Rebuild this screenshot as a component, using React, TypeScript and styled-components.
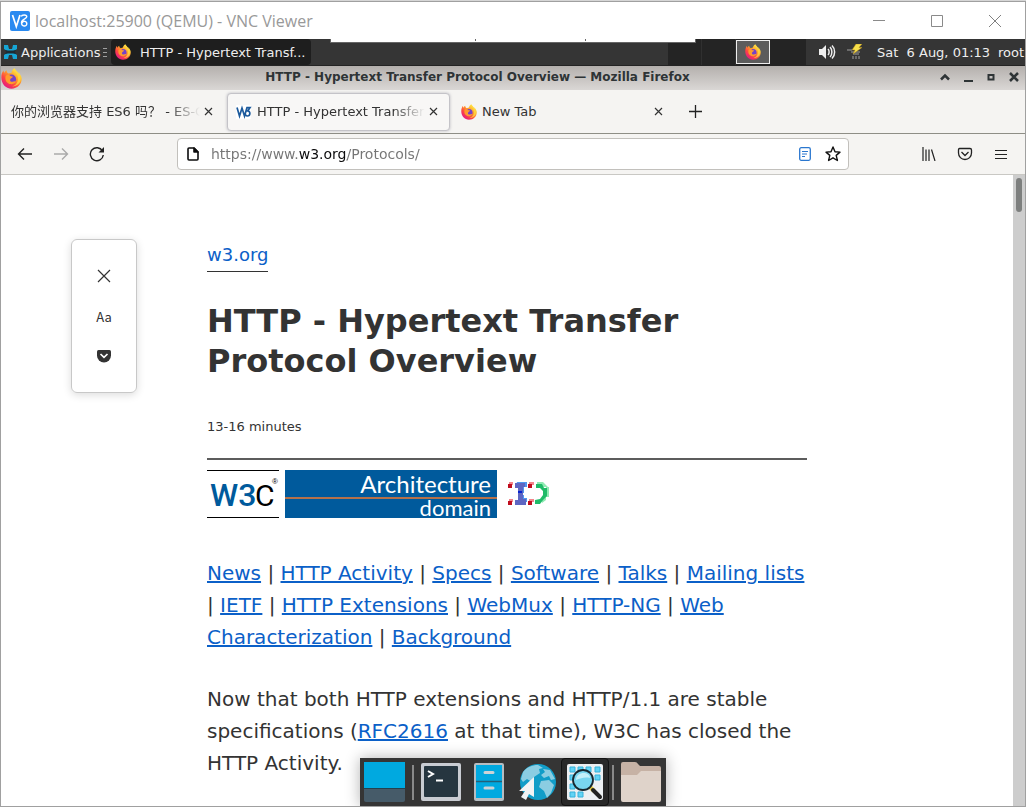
import React from "react";
import styled, { createGlobalStyle } from "styled-components";

const GlobalStyle = createGlobalStyle`
  * { box-sizing: border-box; }
  body {
    margin: 0;
    background: #d6d6d6;
    color: #333333;
    font-family: "DejaVu Sans", "Noto Sans CJK SC", sans-serif;
    font-size: 13px;
  }
  button {
    border: 0;
    padding: 0;
    margin: 0;
    background: transparent;
    color: inherit;
    font: inherit;
  }
  svg { display: block; flex: none; }
`;

const Screen = styled.div`
  height: 100vh;
  padding-top: 1px;
`;

const ViewerWindow = styled.div`
  position: relative;
  display: flex;
  flex-direction: column;
  height: 100%;
  overflow: hidden;
  border: 1px solid #a0a0a0;
  background: #ffffff;
`;

const ViewerBar = styled.header`
  display: flex;
  flex: none;
  align-items: center;
  height: 37px;
  padding: 0 1px 0 9px;
`;

const ViewerTitle = styled.div`
  flex: 1;
  padding-left: 5px;
  color: #999999;
  font-family: "Open Sans", "Noto Sans", sans-serif;
  font-size: 16px;
  white-space: nowrap;
`;

const ViewerButton = styled.button`
  display: flex;
  align-items: center;
  justify-content: center;
  width: 58px;
  height: 37px;
`;

const Panel = styled.nav`
  position: relative;
  display: flex;
  flex: none;
  align-items: stretch;
  height: 27px;
  border-bottom: 1px solid #242424;
  background: #353535;
  color: #eeeeee;
  white-space: nowrap;
`;

const ConnectionTab = styled.div`
  position: absolute;
  top: 0;
  left: 50%;
  width: 366px;
  height: 4px;
  margin-left: -183px;
  display: flex;
  justify-content: space-between;
  padding: 0 109px 0 144px;
  border: 1px solid #666666;
  border-top: 0;
  background: #ffffff;
`;

const Tick = styled.span`
  width: 1px;
  height: 2px;
  background: #666666;
`;

const AppMenu = styled.button`
  display: flex;
  align-items: center;
  width: 110px;
  padding-left: 2px;
  gap: 3px;
`;

const TaskButton = styled.button`
  display: flex;
  align-items: center;
  width: 200px;
  padding: 0 4px;
  gap: 9px;
  border-radius: 4px;
  background: #1e1e1e;
  text-align: left;
`;

const Spacer = styled.div`
  flex: 1;
`;

const Pager = styled.div`
  display: flex;
  width: 138px;
  background: #242424;
`;

const Workspace = styled.button<{ $active?: boolean }>`
  display: flex;
  flex: none;
  align-items: center;
  justify-content: center;
  width: 34px;
  margin: ${(p) => (p.$active ? "1px 0" : "0")};
  border: ${(p) => (p.$active ? "1px solid #eeeeee" : "0")};
  border-right: ${(p) => (p.$active ? "1px solid #eeeeee" : "1px solid #303030")};
  background: ${(p) => (p.$active ? "#5c5c5c" : "transparent")};
`;

const Tray = styled.div`
  display: flex;
  align-items: center;
  padding-left: 13px;
  width: 219px;
`;

const TrayItem = styled.div<{ $width: number }>`
  width: ${(p) => p.$width}px;
  flex: none;
`;

const BrowserTitle = styled.div`
  display: flex;
  flex: none;
  align-items: center;
  height: 24px;
  background: linear-gradient(#b4b0ad, #dad7d5);
  color: #2e3436;
`;

const BrowserTitleText = styled.div`
  flex: 1;
  font-size: 12px;
  font-weight: bold;
  line-height: 20px;
  padding-bottom: 2px;
  text-align: center;
  white-space: nowrap;
`;

const TitleButton = styled.button`
  display: flex;
  align-items: center;
  justify-content: center;
  width: 23px;
  height: 24px;
  padding-bottom: 2px;
`;

const TabStrip = styled.div`
  display: flex;
  flex: none;
  align-items: center;
  height: 44px;
  padding: 0 1px;
  gap: 2px;
  border-bottom: 1px solid #8e8e86;
  background: #f5f4f2;
`;

const Tab = styled.div<{ $active?: boolean }>`
  display: flex;
  flex: 0 1 223px;
  align-items: center;
  min-width: 0;
  height: 38px;
  padding: 0 8px;
  border: 1px solid ${(p) => (p.$active ? "#c4c3c8" : "transparent")};
  border-radius: 4px;
  background: ${(p) => (p.$active ? "#f8f7f6" : "transparent")};
  box-shadow: ${(p) => (p.$active ? "0 0 3px rgba(100, 100, 120, 0.4)" : "none")};
`;

const TabIcon = styled.span`
  width: 16px;
  margin-right: 5px;
  flex: none;
`;

const TabLabel = styled.span<{ $fade?: boolean }>`
  flex: 1;
  min-width: 0;
  overflow: hidden;
  color: #333333;
  font-size: 13px;
  line-height: 20px;
  white-space: pre;
  mask-image: ${(p) => (p.$fade ? "linear-gradient(to left, transparent, #000000 32px)" : "none")};
`;

const IconButton = styled.button<{ $w: number }>`
  display: flex;
  flex: none;
  align-items: center;
  justify-content: center;
  width: ${(p) => p.$w}px;
  height: 32px;
`;

const NavBar = styled.div`
  display: flex;
  flex: none;
  align-items: center;
  height: 41px;
  padding: 0 6px;
  border-bottom: 1px solid #c9c8c4;
  background: #f5f4f2;
`;

const AddressBox = styled.form`
  display: flex;
  flex: 1;
  align-items: center;
  height: 32px;
  margin: 0 62px;
  padding: 0 1px;
  border: 1px solid #c2c0bc;
  border-radius: 4px;
  background: #ffffff;
`;

const AddressInput = styled.input`
  flex: 1;
  min-width: 0;
  height: 28px;
  padding: 0;
  margin-left: 4px;
  border: 0;
  outline: 0;
  background: linear-gradient(90deg, #757575 88px, #0c0c0d 88px, #0c0c0d 136px, #757575 136px);
  background-clip: text;
  color: transparent;
  font-family: "DejaVu Sans", sans-serif;
  font-size: 14px;
`;

const Viewport = styled.div`
  display: flex;
  flex: 1;
  min-height: 0;
`;

const Reader = styled.main`
  display: grid;
  flex: 1;
  grid-template-columns: minmax(80px, 1fr) minmax(0, 600px) minmax(0, 1fr);
  align-items: start;
  overflow: hidden;
  padding-top: 64px;
`;

const ScrollTrack = styled.div`
  width: 12px;
  padding: 3px;
  background: #cdcdcd;
`;

const ScrollThumb = styled.div`
  height: 34px;
  border-radius: 3px;
  background: #7d7f7e;
`;

const ReaderTools = styled.aside`
  justify-self: center;
  display: flex;
  flex-direction: column;
  width: 66px;
  padding: 16px 0;
  border: 1px solid #c8c8c8;
  border-radius: 6px;
  box-shadow: 0 2px 8px rgba(0, 0, 0, 0.14);
`;

const ToolButton = styled.button`
  display: flex;
  align-items: center;
  justify-content: center;
  height: 40px;
  font-family: "Noto Sans CJK SC", sans-serif;
  font-size: 13px;
`;

const Article = styled.article`
  font-size: 20px;
  line-height: 32px;
  a { color: #0b60c8; }
`;

const Domain = styled.a`
  display: block;
  width: fit-content;
  height: 33px;
  border-bottom: 1px solid #333333;
  font-size: 18px;
  text-decoration: none;
`;

const Heading = styled.h1`
  margin: 29px 0 30px;
  font-size: 32px;
  line-height: 40px;
`;

const ReadTime = styled.div`
  height: 49px;
  border-bottom: 2px solid #5c5c5c;
  font-size: 13px;
`;

const Logos = styled.div`
  display: flex;
  align-items: center;
  gap: 6px;
  margin: 10px 0 39px;
`;

const Paragraph = styled.p`
  margin: 0 0 30px;
`;

const Dock = styled.div`
  position: absolute;
  bottom: 0;
  left: 50%;
  display: flex;
  align-items: center;
  width: 306px;
  height: 48px;
  margin-left: -153px;
  padding-left: 1px;
  background: #353535;
  box-shadow: 0 0 14px rgba(0, 0, 0, 0.3);
`;

const DockButton = styled.button<{ $active?: boolean }>`
  display: flex;
  flex: none;
  align-items: center;
  justify-content: center;
  width: 48px;
  height: 48px;
  border: ${(p) => (p.$active ? "1px solid #111111" : "0")};
  border-radius: 4px;
  background: ${(p) => (p.$active ? "#282828" : "transparent")};
`;

const DockLine = styled.span`
  width: 2px;
  height: 35px;
  margin: 0 3px;
  background: #8a8a8a;
`;

const FirefoxIcon = ({ size, id }: { size: number; id: string }) => (
  <svg width={size} height={size} viewBox="0 0 32 32" aria-hidden="true">
    <defs>
      <linearGradient id={id} x1="0.85" y1="0.1" x2="0.2" y2="0.95">
        <stop offset="0" stopColor="#fff44f" />
        <stop offset="0.35" stopColor="#ffa32b" />
        <stop offset="0.65" stopColor="#ff4a3e" />
        <stop offset="1" stopColor="#e31587" />
      </linearGradient>
    </defs>
    <path fill={`url(#${id})`} d="M29.5 10.5c-.7-1.700-2.100-3.500-3.200-4.100.9 1.700 1.300 3.200 1.500 4.300C26 6.300 23 4.400 20.500.4c-2.700 1.500-4.200 4-4.500 6.700-1.500.1-3 .6-4.200 1.400C9.500 7.800 8.400 5.500 8.500 3.500 6.800 4.300 5.600 6 5 7.500c-.9-1-1-3-.9-4C1.700 6 .5 10 .5 14.500.5 24 7 31.500 16 31.500S31.500 25 31.500 16.500c0-2-.8-4.500-2-6z" />
    <circle cx="16" cy="17" r="7" fill="#7542c9" />
    <path fill="#ff9a2c" d="M7 12c3-3 6-2 8 .4 1 .3 3 .2 3.300.5-.2 1.800-3.300 2.300-4.300 4.500-.6 2 1 4 3.500 3.600 2-.4 3.400-1.500 5-.5-1.500 3-4.500 4.500-8 4-5-.7-9-5.500-7.500-12.500z" />
    <path fill="#ffd83d" d="M20 1c0 5 6 7.500 6.500 14 0-2-.5-3.500-1.500-4.500C28 19 24 26 17 28c8 0 13-5 13-11.500C30 9 23 6 20 1z" opacity=".8" />
  </svg>
);

const Cross = ({ size, w = 1.2, color = "#333333" }: { size: number; w?: number; color?: string }) => (
  <svg width={size} height={size} viewBox={`0 0 ${size} ${size}`} stroke={color} strokeWidth={w} fill="none" aria-hidden="true">
    <path d={`M1 1L${size - 1} ${size - 1}M${size - 1} 1L1 ${size - 1}`} />
  </svg>
);

const VncLogo = () => (
  <svg width="20" height="20" viewBox="0 0 20 20" fill="none" stroke="#ffffff" strokeWidth="1.700" aria-hidden="true">
    <rect width="20" height="20" rx="2" fill="#2a8af0" stroke="none" />
    <path d="M2.500 4L6.300 15.500L10 4" />
    <path strokeWidth="1.400" d="M11.300 5.500c.5-2 5.500-2.200 5.500.3 0 2.200-5.300 2-5.300 5.700 0 4.500 5.300 4.500 5.300 1.200 0-3-4-3-4.600-1" />
  </svg>
);

const MenuLogo = () => (
  <svg width="15" height="16" viewBox="0 0 15 16" aria-hidden="true">
    <path fill="#16a5d5" d="M1 1h4l1 4h3l1-4h4v4l-3 2v2l3 2v4h-4l-1-4H6l-1 4H1v-4l3-2V7L1 5z" />
    <path fill="#1c2c34" d="M2 6l3 .5h5L13 6l-1 2 1 2-3-.5H5L2 10l1-2z" />
  </svg>
);

const W3Icon = () => (
  <svg width="16" height="16" viewBox="0 0 16 16" aria-hidden="true">
    <rect width="15" height="14" y="1" fill="#ffffff" />
    <path fill="none" stroke="#1c5a9c" strokeWidth="1.700" d="M1 3.500l2.500 8.500L6 4l2.500 8L11 3.700h3L11.700 7c3 .2 2.800 5-.2 5-1 0-1.500-.5-2-1.300" />
  </svg>
);

const W3CLogo = () => (
  <svg width="72" height="48" viewBox="0 0 72 48" role="img" aria-label="W3C">
    <rect width="72" height="48" fill="#ffffff" />
    <path d="M0 .5h72M0 47.500h72" stroke="#000000" />
    <text x="3" y="36" fontFamily="Roboto, sans-serif" fontSize="32" fontWeight="500" fill="#005a9c">W3</text>
    <text x="48" y="36" fontFamily="Roboto, sans-serif" fontSize="30" fill="#000000">C</text>
    <text x="65" y="14" fontFamily="Liberation Sans" fontSize="8" fill="#000000">®</text>
  </svg>
);

const DomainBanner = () => (
  <svg width="212" height="48" viewBox="0 0 212 48" role="img" aria-label="Architecture domain">
    <rect width="212" height="48" fill="#005a9c" />
    <path d="M0 28h212" stroke="#b5714a" strokeWidth="2" />
    <g fill="#ffffff" fontFamily="Lato, sans-serif" textAnchor="end">
      <text x="206" y="23" fontSize="24">Architecture</text>
      <text x="206" y="46" fontSize="22">domain</text>
    </g>
  </svg>
);

const HttpNgMark = () => (
  <svg width="52" height="48" viewBox="0 0 52 48" aria-hidden="true">
    <path fill="#f2868c" d="M6 12h4v3H6zM26 12h5v3h-5zM6 29h4v3H6zM26 29h5v3h-5z" />
    <path fill="#c00d1e" d="M5 14h4v4H5zM25 14h4v4h-4zM5 31h4v4H5zM25 31h4v4h-4z" />
    <path fill="#4f97ef" d="M14 12h10v5h-3v6h-5v-5h-4zM17 25h4v3h3v4h-5z" />
    <path fill="#5e66c2" d="M12 13h10v4h-2v12h3v6H12v-5h3V18h-3z" />
    <path fill="#0622cf" d="M15 21h4v2h-4z" />
    <path fill="#8feab2" d="M34 12h6l5 5h-7l-4-1zM43 17h3v10h-3zM38 29l5-3v4l-4 3z" />
    <path fill="#1fbb68" d="M33 14h6l2 4h3v8l-4 4-3 4h-5v-4l5-1 3-4v-4l-3-3h-4z" />
  </svg>
);

const links = [
  "News", "HTTP Activity", "Specs", "Software", "Talks", "Mailing lists",
  "IETF", "HTTP Extensions", "WebMux", "HTTP-NG", "Web Characterization", "Background",
];

export default function App() {
  return (
    <Screen>
      <GlobalStyle />
      <ViewerWindow>
        <ViewerBar>
          <VncLogo />
          <ViewerTitle>localhost:25900 (QEMU) - VNC Viewer</ViewerTitle>
          <ViewerButton aria-label="Minimize viewer">
            <svg width="12" height="12" stroke="#8a8a8a"><path d="M0 5.500h12" /></svg>
          </ViewerButton>
          <ViewerButton aria-label="Maximize viewer">
            <svg width="12" height="12" stroke="#8a8a8a" fill="none"><path d="M.5.5h11v11H.5z" /></svg>
          </ViewerButton>
          <ViewerButton aria-label="Close viewer"><Cross size={14} w={1} color="#808080" /></ViewerButton>
        </ViewerBar>

        <Panel>
          <AppMenu>
            <MenuLogo />
            <span>Applications</span>
            <svg width="4" height="11" stroke="#a0a0a0"><path d="M0 1.500h4M0 5.500h4M0 9.500h4" /></svg>
          </AppMenu>
          <TaskButton>
            <FirefoxIcon size={16} id="ff-task" />
            <span>HTTP - Hypertext Transf...</span>
          </TaskButton>
          <Spacer />
          <Pager>
            <Workspace aria-label="Workspace 1" />
            <Workspace aria-label="Workspace 2" />
            <Workspace aria-label="Workspace 3" $active><FirefoxIcon size={16} id="ff-pager" /></Workspace>
          </Pager>
          <Tray>
            <TrayItem $width={28}>
              <svg width="17" height="16" viewBox="0 0 17 16" fill="none" stroke="#eeeeee" strokeWidth="1.500">
                <path fill="#eeeeee" stroke="none" d="M0 5h3l4-4v14l-4-4H0z" />
                <path d="M9 5c1.500 1.500 1.500 4.500 0 6M11 3c2.500 2.500 2.500 7.500 0 10M13 1.500c3.500 3.500 3.500 9.500 0 13" />
              </svg>
            </TrayItem>
            <TrayItem $width={30}>
              <svg width="16" height="16" viewBox="0 0 16 16">
                <path d="M0 6h5M4 8h9M6 10h6M6 12v3M9 12v3M12 12v3" fill="none" stroke="#a0a0a0" />
                <path fill="#f7e04b" stroke="#b48c1c" strokeWidth=".5" d="M9 0h6l-3 3.500h3L6 10l2-4H5z" />
              </svg>
            </TrayItem>
            <TrayItem $width={121}>Sat&nbsp; 6 Aug, 01:13</TrayItem>
            <span>root</span>
          </Tray>
          <ConnectionTab><Tick /><Tick /></ConnectionTab>
        </Panel>

        <BrowserTitle>
          <FirefoxIcon size={21} id="ff-title" />
          <BrowserTitleText>HTTP - Hypertext Transfer Protocol Overview — Mozilla Firefox</BrowserTitleText>
          <TitleButton aria-label="Roll up">
            <svg width="10" height="10" fill="none" stroke="#2e3436" strokeWidth="2.500"><path d="M1 7.500l4-4 4 4" /></svg>
          </TitleButton>
          <TitleButton aria-label="Minimize">
            <svg width="10" height="10" fill="#2e3436"><path d="M1 8h9v2H1z" /></svg>
          </TitleButton>
          <TitleButton aria-label="Maximize">
            <svg width="8" height="8" fill="none" stroke="#2e3436" strokeWidth="2"><path d="M1.500 2h5v4.500h-5z" /></svg>
          </TitleButton>
          <TitleButton aria-label="Close"><Cross size={10} w={2.5} color="#2e3436" /></TitleButton>
        </BrowserTitle>

        <TabStrip>
          <Tab>
            <TabLabel $fade>你的浏览器支持 ES6 吗？ - ES-CHECKER</TabLabel>
            <IconButton $w={16} aria-label="Close first tab"><Cross size={9} /></IconButton>
          </Tab>
          <Tab $active>
            <TabIcon><W3Icon /></TabIcon>
            <TabLabel $fade>HTTP - Hypertext Transfer Protocol</TabLabel>
            <IconButton $w={16} aria-label="Close second tab"><Cross size={9} /></IconButton>
          </Tab>
          <Tab>
            <TabIcon><FirefoxIcon size={16} id="ff-tab" /></TabIcon>
            <TabLabel>New Tab</TabLabel>
            <IconButton $w={16} aria-label="Close third tab"><Cross size={9} /></IconButton>
          </Tab>
          <IconButton $w={36} aria-label="Open a new tab">
            <svg width="13" height="13" stroke="#222222" strokeWidth="1.300"><path d="M0 6.500h13M6.500 0v13" /></svg>
          </IconButton>
        </TabStrip>

        <NavBar>
          <IconButton $w={36} aria-label="Back">
            <svg width="16" height="16" fill="none" stroke="#222222" strokeWidth="1.400"><path d="M15 8H1.500M7 2.500L1.500 8 7 13.500" /></svg>
          </IconButton>
          <IconButton $w={36} aria-label="Forward">
            <svg width="16" height="16" fill="none" stroke="#aaaaaa" strokeWidth="1.400"><path d="M1 8h13.500M9 2.500L14.500 8 9 13.500" /></svg>
          </IconButton>
          <IconButton $w={36} aria-label="Reload">
            <svg width="16" height="16" fill="none" stroke="#222222" strokeWidth="1.400">
              <path d="M13.500 5A6.500 6.500 0 1 0 14.300 9" />
              <path fill="#222222" stroke="none" d="M15 1v5.500H9.500z" />
            </svg>
          </IconButton>
          <AddressBox>
            <IconButton $w={28} type="button" aria-label="Page information">
              <svg width="12" height="14" fill="none" stroke="#0c0c0d" strokeWidth="1.600" strokeLinejoin="round">
                <path d="M1 2q0-1 1-1h5l4 4v7q0 1-1 1H2q-1 0-1-1z" /><path fill="#0c0c0d" d="M7 1v4h4z" />
              </svg>
            </IconButton>
            <AddressInput aria-label="Address" defaultValue="https://www.w3.org/Protocols/" />
            <IconButton $w={28} type="button" aria-label="Reader view">
              <svg width="12" height="14" fill="none" stroke="#2a77cf" strokeWidth="1.300">
                <rect x=".7" y=".7" width="10.600" height="12.600" rx="1.500" />
                <path strokeWidth="1" d="M3 4.500h6M3 7h5M3 9.500h3" />
              </svg>
            </IconButton>
            <IconButton $w={28} type="button" aria-label="Bookmark this page">
              <svg width="16" height="16" fill="none" stroke="#111111" strokeWidth="1.400" strokeLinejoin="round">
                <path d="M8 1l2 4.700 5 .4-3.800 3.300 1.200 5.100L8 11.800l-4.400 2.700 1.200-5.100L1 6.100l5-.4z" />
              </svg>
            </IconButton>
          </AddressBox>
          <IconButton $w={36} aria-label="Library">
            <svg width="14" height="14" stroke="#222222" strokeWidth="1.200"><path d="M1 0v14M4 2.500V14M7 2.500V14M9.500 2.500L13 14" /></svg>
          </IconButton>
          <IconButton $w={36} aria-label="Save to Pocket">
            <svg width="16" height="14" fill="none" stroke="#222222" strokeWidth="1.300">
              <path d="M2.500 1.500h10.500q1.500 0 1.500 1.500v3a6.500 6.500 0 0 1-13 0V3q0-1.500 1-1.500z" /><path d="M4.500 5L8 8.500 11.500 5" />
            </svg>
          </IconButton>
          <IconButton $w={36} aria-label="Menu">
            <svg width="12" height="11" stroke="#222222" strokeWidth="1"><path d="M0 1.500h12M0 5.500h12M0 9.500h12" /></svg>
          </IconButton>
        </NavBar>

        <Viewport>
          <Reader>
            <ReaderTools>
              <ToolButton aria-label="Close reader view"><Cross size={14} /></ToolButton>
              <ToolButton>Aa</ToolButton>
              <ToolButton aria-label="Save article">
                <svg width="14" height="13" fill="#333333"><path d="M1.500 0h11q1.500 0 1.500 1.500v4a7 7 0 0 1-14 0v-4Q0 0 1.500 0z" /><path d="M3.500 4L7 7.300 10.500 4" fill="none" stroke="#ffffff" strokeWidth="1.700" /></svg>
              </ToolButton>
            </ReaderTools>
            <Article>
              <Domain href="#w3">w3.org</Domain>
              <Heading>HTTP - Hypertext Transfer Protocol Overview</Heading>
              <ReadTime>13-16 minutes</ReadTime>
              <Logos><W3CLogo /><DomainBanner /><HttpNgMark /></Logos>
              <Paragraph>
                {links.map((label, i) => (
                  <React.Fragment key={label}>
                    {i > 0 && " | "}
                    <a href="#section">{label}</a>
                  </React.Fragment>
                ))}
              </Paragraph>
              <Paragraph>
                Now that both HTTP extensions and HTTP/1.1 are stable specifications (<a href="#rfc">RFC2616</a> at that
                time), W3C has closed the HTTP Activity.
              </Paragraph>
            </Article>
          </Reader>
          <ScrollTrack><ScrollThumb /></ScrollTrack>
        </Viewport>

        <Dock>
          <DockButton aria-label="Show desktop">
            <svg width="42" height="42"><rect y="1" width="41" height="40" rx="2" fill="#465b69" /><path fill="#00a9e0" d="M0 1h41v26H0z" /><path d="M0 27.500h41" stroke="#23414f" /></svg>
          </DockButton>
          <DockLine />
          <DockButton aria-label="Terminal">
            <svg width="40" height="38"><rect width="40" height="38" rx="2" fill="#c9ccd2" /><rect x="3" y="3" width="34" height="31" rx="1" fill="#263640" /><path d="M7 8l5 3-5 3M15 17.500h7" fill="none" stroke="#ffffff" strokeWidth="2" /></svg>
          </DockButton>
          <DockButton aria-label="File manager">
            <svg width="30" height="38"><rect width="30" height="38" rx="2" fill="#b6bdc2" /><path fill="#00a9e0" d="M2 2h26v33H2z" /><path d="M2 18.500h26" stroke="#236078" strokeWidth="1.500" /><path d="M11 9.500h8M11 25h8" stroke="#ccd3d6" strokeWidth="3" strokeLinecap="round" /></svg>
          </DockButton>
          <DockButton aria-label="Web browser">
            <svg width="38" height="38" viewBox="0 0 38 38">
              <circle cx="20" cy="19" r="18" fill="#119dc8" />
              <path fill="#8bcde2" d="M5 9C9 4 14 2 20 2l5 3-4 1 1 4-6 4-2 5-5-3-4 3-2-3zM25 6l7 1 5 9-4 1-2-4-5 2-3-3 4-3zM23 18l8-1 5 5-3 8-4 5-3-7-5-4z" />
              <path fill="#f2f3f4" d="M16 14v20l-5-3-3 6-5-3 4-6H1z" />
            </svg>
          </DockButton>
          <DockButton aria-label="Application finder" $active>
            <svg width="38" height="38" viewBox="0 0 38 38">
              <rect x="1" y="1" width="36" height="36" rx="2" fill="#eceff2" />
              <path fill="#62d3f5" stroke="#35b1d9" d="M4 4h5v5H4zM12 4h5v5h-5zM20 4h5v5h-5zM29 4h5v5h-5zM29 12h5v5h-5zM4 12h5v5H4zM4 21h5v5H4zM4 29h5v5H4zM12 29h5v5h-5z" />
              <path d="M24 24l4 4" stroke="#e6c83e" strokeWidth="4" /><path d="M27 27l7 7" stroke="#222222" strokeWidth="4" strokeLinecap="round" />
              <circle cx="17" cy="17" r="10" fill="#79d6f0" stroke="#17262e" strokeWidth="1.800" />
              <path fill="#c4eff9" d="M10 17c0-9 14-9 14-2-5-1-9 0-14 2z" />
            </svg>
          </DockButton>
          <DockLine />
          <DockButton aria-label="Home folder">
            <svg width="40" height="40"><path fill="#c6b2a5" d="M0 2q0-2 2-2h12q2 0 3 2l2 2h19q2 0 2 2v20H0z" /><path fill="#dfd3ca" d="M0 13h16l4-4h20v29q0 2-2 2H2q-2 0-2-2z" /></svg>
          </DockButton>
        </Dock>
      </ViewerWindow>
    </Screen>
  );
}
